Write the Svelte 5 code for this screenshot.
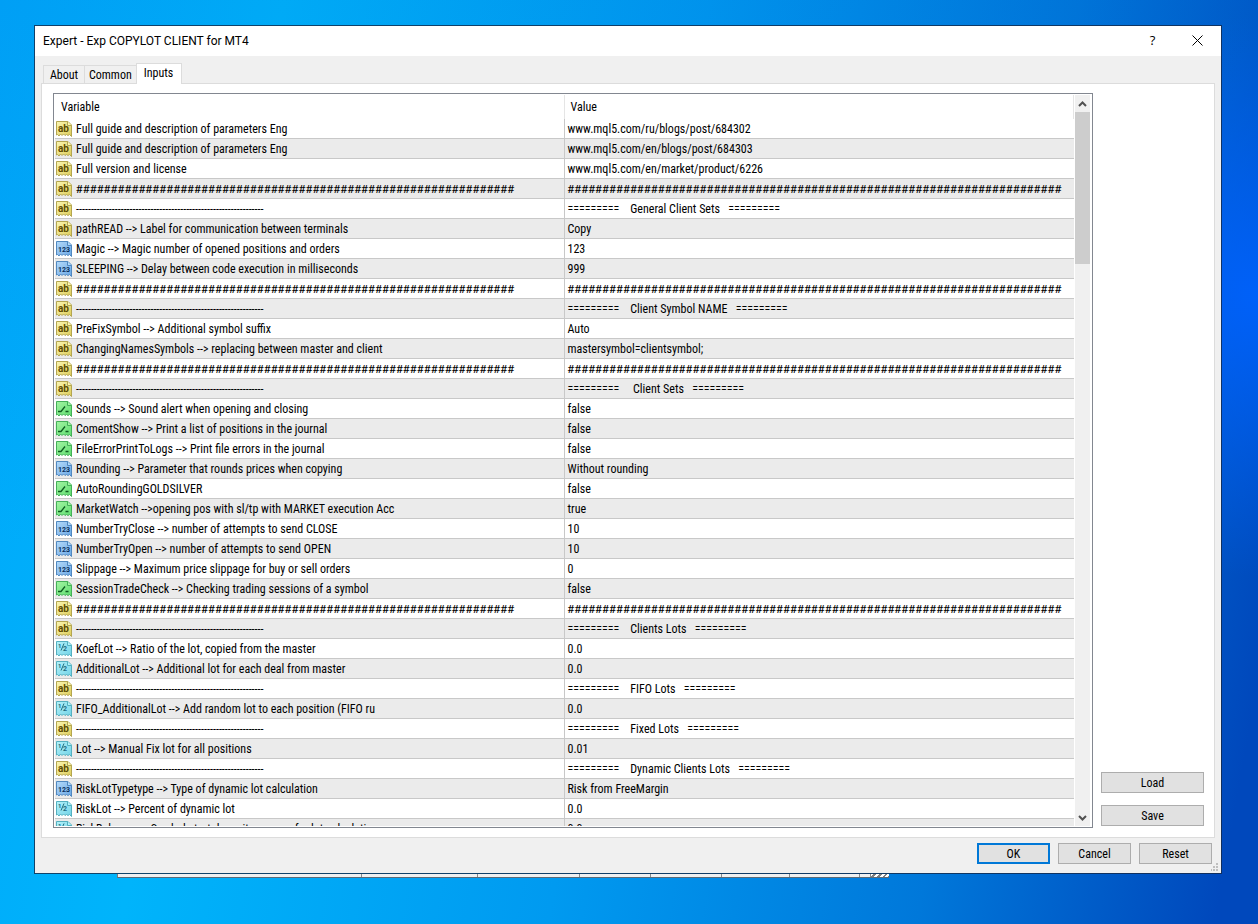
<script>
	const HASH_NAME = '#'.repeat(63);
	const HASH_VALUE = '#'.repeat(71);
	const DASHES = '-'.repeat(63);

	const EQ = '=========';

	const tabs = ['About', 'Common', 'Inputs'];
	let activeTab = $state('Inputs');

	const inputs = [
		{ type: 'string', name: 'Full guide and description of parameters Eng', value: 'www.mql5.com/ru/blogs/post/684302' },
		{ type: 'string', name: 'Full guide and description of parameters Eng', value: 'www.mql5.com/en/blogs/post/684303' },
		{ type: 'string', name: 'Full version and license', value: 'www.mql5.com/en/market/product/6226' },
		{ type: 'string', name: HASH_NAME, value: HASH_VALUE },
		{ type: 'string', name: DASHES, value: `${EQ}    General Client Sets   ${EQ}` },
		{ type: 'string', name: 'pathREAD --> Label for communication between terminals', value: 'Copy' },
		{ type: 'int', name: 'Magic --> Magic number of opened positions and orders', value: '123' },
		{ type: 'int', name: 'SLEEPING --> Delay between code execution in milliseconds', value: '999' },
		{ type: 'string', name: HASH_NAME, value: HASH_VALUE },
		{ type: 'string', name: DASHES, value: `${EQ}    Client Symbol NAME   ${EQ}` },
		{ type: 'string', name: 'PreFixSymbol --> Additional symbol suffix', value: 'Auto' },
		{ type: 'string', name: 'ChangingNamesSymbols --> replacing between master and client', value: 'mastersymbol=clientsymbol;' },
		{ type: 'string', name: HASH_NAME, value: HASH_VALUE },
		{ type: 'string', name: DASHES, value: `${EQ}     Client Sets   ${EQ}` },
		{ type: 'bool', name: 'Sounds --> Sound alert when opening and closing', value: 'false' },
		{ type: 'bool', name: 'ComentShow --> Print a list of positions in the journal', value: 'false' },
		{ type: 'bool', name: 'FileErrorPrintToLogs --> Print file errors in the journal', value: 'false' },
		{ type: 'int', name: 'Rounding --> Parameter that rounds prices when copying', value: 'Without rounding' },
		{ type: 'bool', name: 'AutoRoundingGOLDSILVER', value: 'false' },
		{ type: 'bool', name: 'MarketWatch -->opening pos with sl/tp with MARKET execution Acc', value: 'true' },
		{ type: 'int', name: 'NumberTryClose --> number of attempts to send CLOSE', value: '10' },
		{ type: 'int', name: 'NumberTryOpen --> number of attempts to send OPEN', value: '10' },
		{ type: 'int', name: 'Slippage --> Maximum price slippage for buy or sell orders', value: '0' },
		{ type: 'bool', name: 'SessionTradeCheck --> Checking trading sessions of a symbol', value: 'false' },
		{ type: 'string', name: HASH_NAME, value: HASH_VALUE },
		{ type: 'string', name: DASHES, value: `${EQ}    Clients Lots   ${EQ}` },
		{ type: 'double', name: 'KoefLot --> Ratio of the lot, copied from the master', value: '0.0' },
		{ type: 'double', name: 'AdditionalLot --> Additional lot for each deal from master', value: '0.0' },
		{ type: 'string', name: DASHES, value: `${EQ}    FIFO Lots   ${EQ}` },
		{ type: 'double', name: 'FIFO_AdditionalLot --> Add random lot to each position (FIFO ru', value: '0.0' },
		{ type: 'string', name: DASHES, value: `${EQ}    Fixed Lots   ${EQ}` },
		{ type: 'double', name: 'Lot --> Manual Fix lot for all positions', value: '0.01' },
		{ type: 'string', name: DASHES, value: `${EQ}    Dynamic Clients Lots   ${EQ}` },
		{ type: 'int', name: 'RiskLotTypetype --> Type of dynamic lot calculation', value: 'Risk from FreeMargin' },
		{ type: 'double', name: 'RiskLot --> Percent of dynamic lot', value: '0.0' },
		{ type: 'double', name: 'RiskBalance --> Symbol start deposit currency for lot calculation', value: '0.0' }
	];

	const ICONS = {
		string: { light: '#fbf6b4', dark: '#dccb58', edge: '#b4a650', ink: '#5c4c00' },
		int: { light: '#b4dafa', dark: '#6aa6e4', edge: '#5088c0', ink: '#08305c' },
		bool: { light: '#a4f4a4', dark: '#5cdc6c', edge: '#44b058', ink: '#0c5c20' },
		double: { light: '#b4f2fa', dark: '#70d2e6', edge: '#54b0c0', ink: '#1c6c80' }
	};

	// column widths of the status bar that shows from the window behind
	const statusCells = [244, 116, 102, 71, 71, 68, 70, 11];
</script>

{#snippet typeIcon(type)}
	{@const c = ICONS[type]}
	<svg class="type-icon" viewBox="0 0 16 16" aria-hidden="true">
		<path
			d="M0.5 0.5H12L15.5 4V15.5L13.5 13.5L12 14.5L10.5 13.5L9 14.5L7.5 13L6 14.5L4.5 13L3 15L1.5 13.5L0.5 14Z"
			fill="url(#paper-{type})"
			stroke={c.edge}
		/>
		<path d="M11.5 0.5V4.5H15.5" fill={c.light} stroke={c.edge} />
		{#if type === 'string'}
			<text x="2" y="11" font-size="10" fill={c.ink}>ab</text>
		{:else if type === 'int'}
			<text x="2" y="11" font-size="7" fill={c.ink}>123</text>
		{:else if type === 'double'}
			<text x="2" y="7" font-size="6" fill={c.ink}>1</text>
			<path d="M5 9.5L8 2.5" stroke={c.ink} fill="none" />
			<text x="7" y="10" font-size="7" fill={c.ink}>2</text>
		{:else}
			<path d="M2 10.5H5L9 5.5M9.5 10.5H12.5" stroke={c.ink} stroke-width="1.3" fill="none" />
		{/if}
	</svg>
{/snippet}

<svg class="defs" width="0" height="0" aria-hidden="true">
	<defs>
		{#each Object.entries(ICONS) as [type, c] (type)}
			<linearGradient id="paper-{type}" x1="0" y1="0" x2="1" y2="1">
				<stop offset="0" stop-color={c.light} />
				<stop offset="1" stop-color={c.dark} />
			</linearGradient>
		{/each}
	</defs>
</svg>

<div class="desktop">
	<div class="dialog" role="dialog" aria-labelledby="dialog-title">
		<header class="titlebar">
			<h1 id="dialog-title">Expert - Exp COPYLOT CLIENT for MT4</h1>
			<button class="title-btn" aria-label="Help">?</button>
			<button class="title-btn" aria-label="Close">
				<svg width="11" height="11" viewBox="0 0 11 11"><path d="M0.5 0.5L10.5 10.5M10.5 0.5L0.5 10.5" stroke="#000" fill="none" /></svg>
			</button>
		</header>

		<div class="tabs" role="tablist">
			{#each tabs as tab (tab)}
				<button
					class="tab"
					class:active={tab === activeTab}
					role="tab"
					aria-selected={tab === activeTab}
					onclick={() => (activeTab = tab)}>{tab}</button
				>
			{/each}
		</div>

		<div class="panel">
			<div class="list">
				<div class="rows">
					<table>
						<thead>
							<tr><th>Variable</th><th>Value</th></tr>
						</thead>
						<tbody>
							{#each inputs as input}
								<tr>
									<td>
										<div class="cell">
											{@render typeIcon(input.type)}
											<span class:hashes={input.name === HASH_NAME}>{input.name}</span>
										</div>
									</td>
									<td><span class:hashes={input.value === HASH_VALUE}>{input.value}</span></td>
								</tr>
							{/each}
						</tbody>
					</table>
				</div>
				<div class="scrollbar">
					<button class="scroll-btn" aria-label="Scroll up">
						<svg width="9" height="6" viewBox="0 0 9 6"><path d="M1 5L4.5 1.5L8 5" /></svg>
					</button>
					<div class="thumb"></div>
					<button class="scroll-btn down" aria-label="Scroll down">
						<svg width="9" height="6" viewBox="0 0 9 6"><path d="M1 1L4.5 4.5L8 1" /></svg>
					</button>
				</div>
			</div>
			<div class="side">
				<button class="btn">Load</button>
				<button class="btn">Save</button>
			</div>
		</div>

		<footer class="actions">
			<button class="btn primary">OK</button>
			<button class="btn">Cancel</button>
			<button class="btn">Reset</button>
			<svg class="grip" width="7" height="8" viewBox="0 0 7 8" aria-hidden="true">
				<path d="M5 0h2v2h-2zM2 3h2v2h-2zM5 3h2v2h-2zM0 6h1v2h-1zM2 6h2v2h-2zM5 6h2v2h-2z" fill="#bfbfbf" />
			</svg>
		</footer>
	</div>

	<div class="behind">
		{#each statusCells as width}
			<span style="width: {width}px"></span>
		{/each}
		<i></i>
	</div>
</div>

<style>
	:global(body) {
		margin: 0;
	}

	.defs {
		position: absolute;
	}

	.desktop {
		height: 100vh;
		box-sizing: border-box;
		padding: 25px 36px 0 34px;
		display: flex;
		flex-direction: column;
		overflow: hidden;
		font-family: 'Roboto Condensed', Roboto, 'Liberation Sans', sans-serif;
		font-size: 12px;
		line-height: 14px;
		color: #000;
		background:
			radial-gradient(circle at 100% 32%, rgba(0, 98, 255, 0.9), rgba(0, 98, 255, 0) 20%),
			linear-gradient(to bottom, rgba(0, 80, 200, 0.1), rgba(0, 190, 255, 0) 60%),
			linear-gradient(100deg, #00a8fa 0%, #00b4fb 20%, #009af0 50%, #0078da 76%, #0048bc 97%);
	}

	.dialog {
		flex: 1;
		min-height: 0;
		display: flex;
		flex-direction: column;
		border: 1px solid rgba(20, 40, 70, 0.8);
		background: #f0f0f0;
		background-clip: padding-box;
	}

	.titlebar {
		height: 30px;
		display: flex;
		align-items: center;
		background: #fff;
		padding: 0 1px 0 8px;
	}

	h1 {
		flex: 1;
		margin: 0;
		font-family: Roboto, 'Liberation Sans', sans-serif;
		font-size: 12px;
		font-weight: normal;
	}

	.title-btn {
		width: 45px;
		height: 30px;
		padding: 0 0 2px;
		border: none;
		background: none;
		color: #000;
		font: 13px/20px 'Open Sans', sans-serif;
		display: flex;
		align-items: center;
		justify-content: center;
	}

	.tabs {
		display: flex;
		align-items: flex-end;
		padding: 7px 8px 0;
	}

	.tab {
		box-sizing: border-box;
		height: 18px;
		min-width: 41px;
		padding: 0 4px;
		border: 1px solid #dcdcdc;
		border-width: 1px 0 0 1px;
		background: #f0f0f0;
		color: #000;
		font: inherit;
	}

	.tab.active {
		position: relative;
		height: 21px;
		margin-bottom: -1px;
		padding: 0 8px 2px 7px;
		border-right-width: 1px;
		background: #fff;
	}

	.panel {
		flex: 1;
		min-height: 0;
		display: flex;
		gap: 8px;
		margin: 0 6px;
		padding: 9px 10px 9px 11px;
		border: 1px solid #dcdcdc;
		background: #fff;
	}

	.list {
		flex: 1;
		min-width: 0;
		display: flex;
		gap: 1px;
		padding: 1px 2px 1px 1px;
		border: 1px solid #828790;
	}

	.rows {
		flex: 1;
		min-width: 0;
		overflow: hidden;
	}

	table {
		width: 100%;
		table-layout: fixed;
		border-collapse: separate;
		border-spacing: 0;
	}

	th {
		height: 24px;
		padding: 0 6px;
		border-right: 1px solid #e5e5e5;
		text-align: left;
		font-weight: normal;
	}

	td {
		height: 19px;
		padding: 0 3px;
		border-bottom: 1px solid #c8c8c8;
		white-space: pre;
		overflow: hidden;
	}

	td:first-child {
		padding: 0 1px;
		border-right: 1px solid #c8c8c8;
	}

	tbody tr:nth-child(even) {
		background: #ebebeb;
	}

	.cell {
		display: flex;
		align-items: center;
		gap: 4px;
	}

	.type-icon {
		width: 16px;
		height: 16px;
		flex: none;
	}

	.type-icon text {
		font-family: Roboto, 'Liberation Sans', sans-serif;
		font-weight: bold;
	}

	.hashes {
		font-family: Lato, 'Liberation Sans', sans-serif;
	}

	.scrollbar {
		width: 15px;
		display: flex;
		flex-direction: column;
		background: #f0f0f0;
	}

	.scroll-btn {
		height: 17px;
		padding: 0;
		border: none;
		background: none;
		display: flex;
		align-items: center;
		justify-content: center;
	}

	.scroll-btn path {
		fill: none;
		stroke: #505050;
		stroke-width: 2;
	}

	.scroll-btn.down {
		margin-top: auto;
	}

	.thumb {
		height: 152px;
		background: #cdcdcd;
	}

	.side {
		width: 103px;
		display: flex;
		flex-direction: column;
		justify-content: flex-end;
		gap: 12px;
		padding-bottom: 2px;
	}

	.btn {
		box-sizing: border-box;
		height: 21px;
		padding: 0;
		border: 1px solid #adadad;
		background: #e1e1e1;
		color: #000;
		font: inherit;
	}

	.actions {
		position: relative;
		display: flex;
		justify-content: flex-end;
		gap: 8px;
		padding: 5px 9px 9px;
	}

	.actions .btn {
		width: 73px;
	}

	.btn.primary {
		border: 2px solid #0078d7;
	}

	.grip {
		position: absolute;
		right: 3px;
		bottom: 2px;
	}

	/* bottom edge of the window behind the dialog */
	.behind {
		flex: none;
		display: flex;
		height: 3px;
		width: max-content;
		margin: 0 0 46px 83px;
		border-left: 1px solid #7a7a7a;
		border-bottom: 1px solid #5a6a78;
		background: #f0f0f0;
	}

	.behind span {
		box-sizing: border-box;
		flex: none;
		border-right: 1px solid #8a8a8a;
	}

	.behind i {
		flex: none;
		width: 18px;
		background: repeating-linear-gradient(135deg, #fff 0 2px, #808080 2px 4px);
	}
</style>
